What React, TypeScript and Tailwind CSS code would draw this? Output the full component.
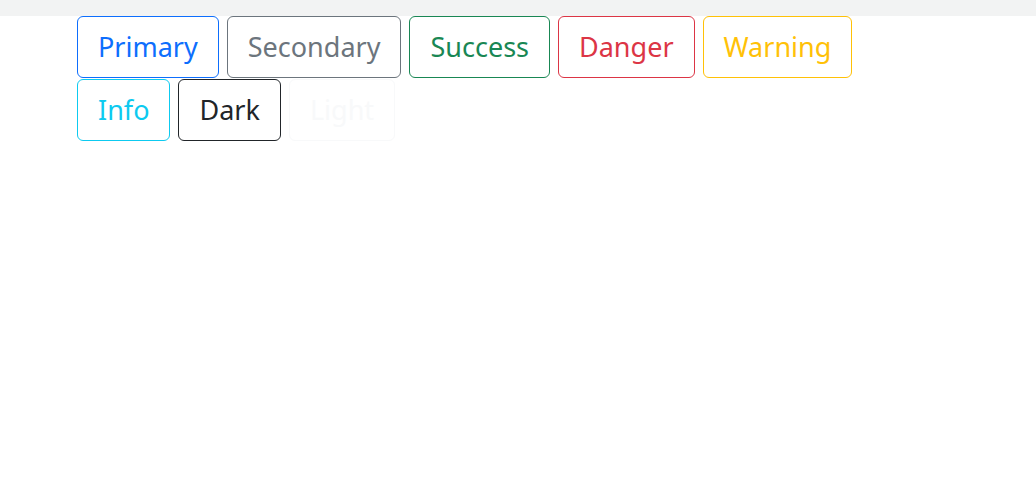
const buttons = [
  ["Primary", "border-[#0d6efd] text-[#0d6efd]"],
  ["Secondary", "border-[#6c757d] text-[#6c757d]"],
  ["Success", "border-[#198754] text-[#198754]"],
  ["Danger", "border-[#dc3545] text-[#dc3545]"],
  ["Warning", "border-[#ffc107] text-[#ffc107]"],
  ["Info", "border-[#0dcaf0] text-[#0dcaf0]"],
  ["Dark", "border-[#212529] text-[#212529]"],
  ["Light", "border-[#f8f9fa] text-[#f8f9fa]"],
];

export default function App() {
  return (
    <div className="min-h-[491px] bg-white font-['Noto_Sans',sans-serif]">
      <div className="h-4 bg-[#f2f3f3]" />
      <div className="flex w-[940px] flex-wrap gap-x-2 gap-y-px pl-[77px]">
        {buttons.map(([label, cls]) => (
          <button
            key={label}
            className={`flex h-[62px] items-center rounded-md border bg-white px-[20px] text-[27px] ${cls}`}
          >
            {label}
          </button>
        ))}
      </div>
    </div>
  );
}
